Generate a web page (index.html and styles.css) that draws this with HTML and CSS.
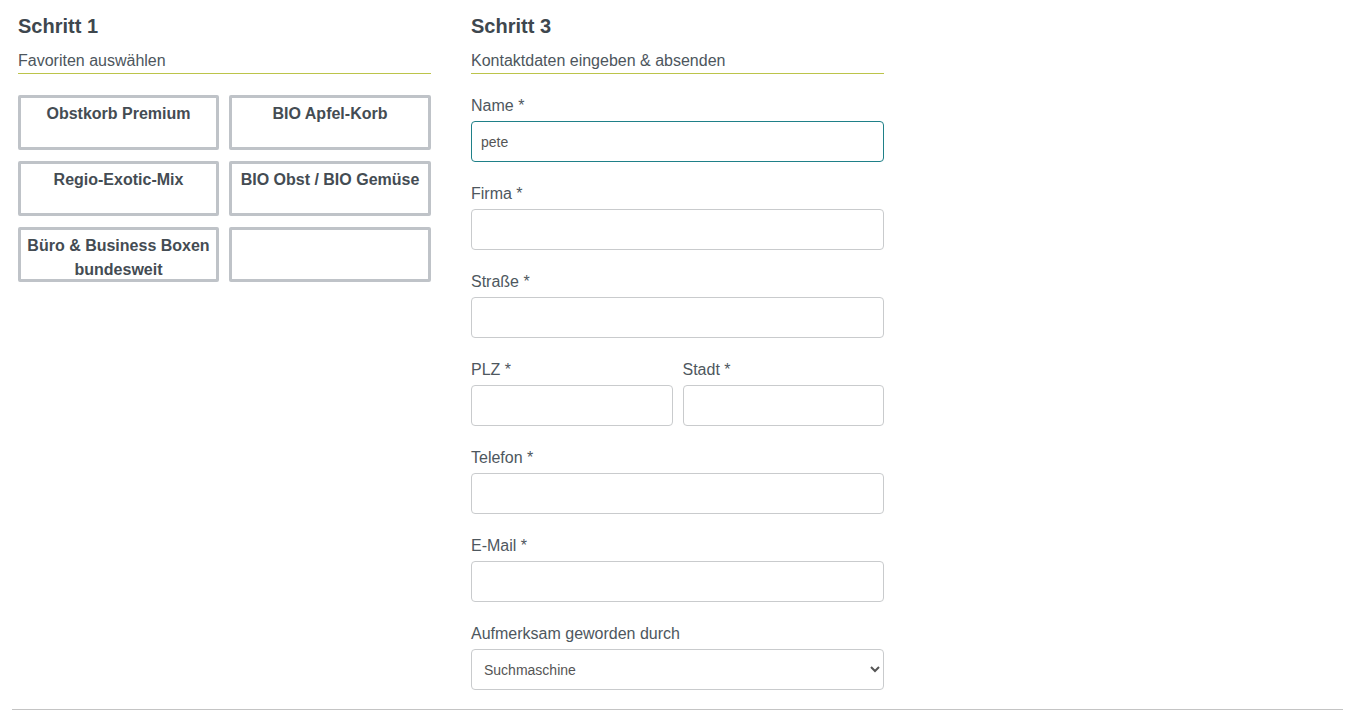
FILE: index.html
```html
<!DOCTYPE html>
<html lang="de">
<head>
<meta charset="utf-8">
<title>Anfrage</title>
<link rel="stylesheet" href="styles.css">
</head>
<body>
<div class="page">
  <div class="columns">
    <section class="col">
      <h2 class="step-title">Schritt 1</h2>
      <p class="step-sub">Favoriten auswählen</p>
      <div class="fav-grid">
        <div class="fav">Obstkorb Premium</div>
        <div class="fav">BIO Apfel-Korb</div>
        <div class="fav">Regio-Exotic-Mix</div>
        <div class="fav">BIO Obst / BIO Gemüse</div>
        <div class="fav">Büro &amp; Business Boxen bundesweit</div>
        <div class="fav"></div>
      </div>
    </section>
    <section class="col">
      <h2 class="step-title">Schritt 3</h2>
      <p class="step-sub">Kontaktdaten eingeben &amp; absenden</p>
      <form class="form">
        <div class="field">
          <label class="label">Name *</label>
          <input class="input input-focus" type="text" value="pete">
        </div>
        <div class="field">
          <label class="label">Firma *</label>
          <input class="input" type="text">
        </div>
        <div class="field">
          <label class="label">Straße *</label>
          <input class="input" type="text">
        </div>
        <div class="field-row">
          <div class="field">
            <label class="label">PLZ *</label>
            <input class="input" type="text">
          </div>
          <div class="field">
            <label class="label">Stadt *</label>
            <input class="input" type="text">
          </div>
        </div>
        <div class="field">
          <label class="label">Telefon *</label>
          <input class="input" type="text">
        </div>
        <div class="field">
          <label class="label">E-Mail *</label>
          <input class="input" type="text">
        </div>
        <div class="field">
          <label class="label">Aufmerksam geworden durch</label>
          <select class="input select">
            <option>Suchmaschine</option>
          </select>
        </div>
      </form>
    </section>
  </div>
  <hr class="rule">
</div>
</body>
</html>
```
FILE: styles.css
```css
html, body {
  margin: 0;
  padding: 0;
  background: #fff;
}
body {
  font-family: "Liberation Sans", Arial, sans-serif;
  color: #4b545c;
}
.page {
  padding: 14px 12px 0 12px;
}
.columns {
  display: flex;
  gap: 40px;
  padding: 0 6px;
}
.col {
  width: 413px;
}
.step-title {
  margin: 0;
  font-size: 20px;
  line-height: 24px;
  font-weight: bold;
  color: #3e474e;
}
.step-sub {
  margin: 10px 0 0 0;
  font-size: 16px;
  line-height: 22px;
  padding-top: 2px;
  padding-bottom: 1px;
  border-bottom: 1px solid #bcc44a;
  color: #4d565d;
}
.fav-grid {
  margin-top: 21px;
  display: grid;
  grid-template-columns: 201px 202px;
  grid-auto-rows: 55px;
  column-gap: 10px;
  row-gap: 11px;
}
.fav {
  box-sizing: border-box;
  border: 3px solid #bfc3c8;
  border-radius: 2px;
  padding: 4px 4px 0 4px;
  text-align: center;
  font-size: 16px;
  line-height: 24px;
  font-weight: bold;
  color: #444c53;
}
.form {
  margin-top: 19px;
  display: flex;
  flex-direction: column;
  gap: 19px;
}
.field {
  display: flex;
  flex-direction: column;
  gap: 4px;
  flex: 1;
}
.field-row {
  display: flex;
  gap: 10px;
}
.label {
  font-size: 16px;
  line-height: 22px;
  padding-top: 2px;
  color: #4e575e;
}
.input {
  box-sizing: border-box;
  height: 41px;
  width: 100%;
  border: 1px solid #c9cbcd;
  border-radius: 4px;
  padding: 0 9px;
  font-family: "Liberation Sans", Arial, sans-serif;
  font-size: 14px;
  color: #555;
  background: #fff;
  outline: none;
}
.input-focus {
  border-color: #1f8088;
}
.select {
  padding: 0 8px;
}
.rule {
  margin: 19px 0 0 0;
  border: 0;
  border-top: 1px solid #c4c4c4;
  height: 0;
}
```
